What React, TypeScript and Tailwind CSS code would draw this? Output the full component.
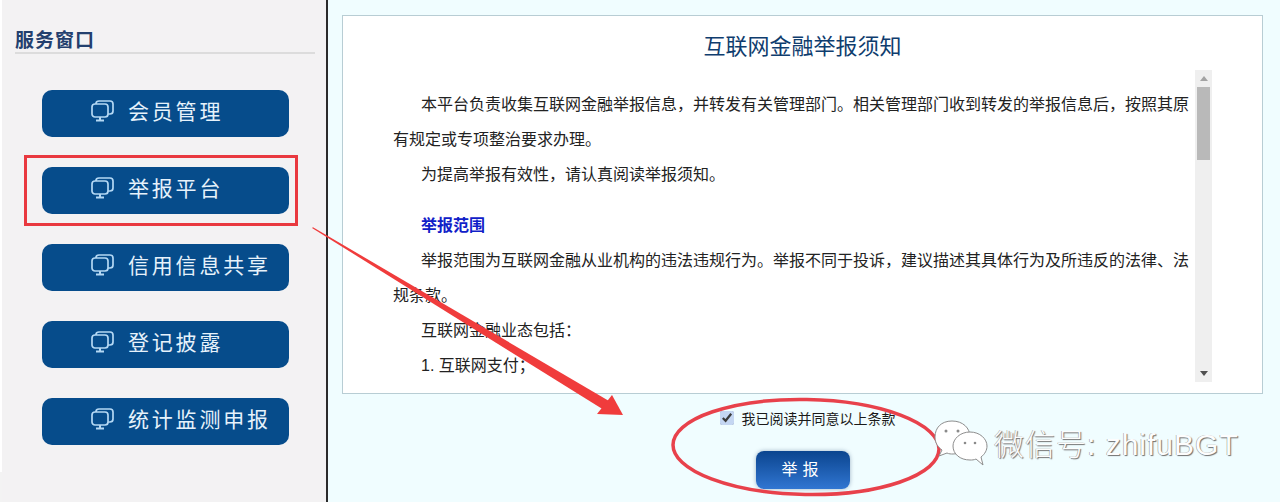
const cjk = "font-['Liberation_Sans','Noto_Sans_CJK_SC',sans-serif]";

const menu = ["会员管理", "举报平台", "信用信息共享", "登记披露", "统计监测申报"];

const MonitorIcon = () => (
  <svg width="23" height="22" viewBox="0 0 23 22" fill="none" stroke="#b4d8f4" strokeWidth="1.7" className="shrink-0">
    <rect x="1" y="4" width="16" height="13" rx="3" />
    <path d="M5 4 V3.5 Q5 1 8 1 H19 Q22 1 22 4 V11 Q22 14 19 14 H17" />
    <path d="M9 17 V20 M5 20.5 H13" strokeWidth="2" />
  </svg>
);

const ScrollBar = () => (
  <div className="w-[17px] h-[312px] bg-[#efefef] flex flex-col items-center shrink-0">
    <div className="h-[17px] flex items-center justify-center">
      <div className="w-0 h-0 border-x-[4px] border-x-transparent border-b-[5px] border-b-[#a3a3a3]" />
    </div>
    <div className="w-[13px] h-[73px] bg-[#b9b9b9]" />
    <div className="flex-1" />
    <div className="h-[17px] flex items-center justify-center">
      <div className="w-0 h-0 border-x-[4px] border-x-transparent border-t-[5px] border-t-[#505050]" />
    </div>
  </div>
);

const Notes = () => (
  <svg width="1280" height="502" className="absolute left-0 top-0 pointer-events-none">
    <polygon points="312,228 313,227.2 609,401 604,410" fill="#f03c3c" />
    <polygon points="623,415 597,414 612,395" fill="#f03c3c" />
    <ellipse cx="806" cy="447" rx="133" ry="47.5" fill="none" stroke="#e8414b" strokeWidth="3.5" transform="rotate(1 806 447)" />
    <g stroke="#8d8d8d" strokeWidth="1" fill="#ffffff">
      <path d="M952 421 C941 421 935 428 935 437 C935 443 938 447 942 450 L939 456 L947 453 C949 454 951 454 953 454 C964 454 970 447 970 437 C970 428 963 421 952 421 Z" />
      <path d="M970 432 C960 432 953 439 953 446 C953 454 960 460 970 460 C972 460 974 460 976 459 L983 465 L981 457 C985 454 987 450 987 446 C987 439 980 432 970 432 Z" />
    </g>
    <g fill="#8a8a8a">
      <circle cx="946" cy="431" r="1.5" />
      <circle cx="958" cy="431" r="1.5" />
      <circle cx="965" cy="443" r="1.3" />
      <circle cx="975" cy="443" r="1.3" />
    </g>
  </svg>
);

export default function App() {
  return (
    <div className={`relative w-[1280px] h-[502px] overflow-hidden flex bg-[#f3f3f3] ${cjk}`}>
      <div className="w-[2px] h-[472px] bg-white shrink-0" />

      <aside className="w-[324px] h-full shrink-0 bg-[#f3f2f3]">
        <div className="ml-[13px] w-[300px] mt-[29px] h-[25px] border-b-2 border-[#dcdcdc]">
          <h2 className="text-[19px] leading-[24px] font-bold tracking-[1px] text-[#23406e]">服务窗口</h2>
        </div>
        <nav className="mt-[36px] ml-[40px] flex flex-col gap-[30px]">
          {menu.map((item) => (
            <a key={item} className="w-[247px] h-[47px] pl-[49px] pb-[5px] flex items-center gap-[14px] rounded-[10px] bg-[#064c8b] text-[#e6f2fb]">
              <MonitorIcon />
              <span className="text-[21px] leading-none tracking-[2.8px] whitespace-nowrap">{item}</span>
            </a>
          ))}
        </nav>
      </aside>

      <div className="w-[2px] h-full bg-[#2b2b2b] shrink-0" />

      <main className="flex-1 bg-[#f0fdff] pl-[14px] pr-[17px] pt-[15px]">
        <section className="h-[379px] border border-[#b8cdd4] bg-white flex flex-col">
          <h1 className="h-[54px] pt-[15px] text-center text-[22px] leading-[32px] text-[#0f3d6e]">互联网金融举报须知</h1>
          <div className="flex pl-[50px]">
            <div className="w-[802px] h-[312px] overflow-hidden pt-[17px] text-[16px] leading-[35px] text-[#222]">
              <div className="w-[796px]">
                <p className="indent-[28px]">本平台负责收集互联网金融举报信息，并转发有关管理部门。相关管理部门收到转发的举报信息后，按照其原有规定或专项整治要求办理。</p>
                <p className="indent-[28px]">为提高举报有效性，请认真阅读举报须知。</p>
                <p className="indent-[28px] mt-[16px] font-bold text-[#1020c8]">举报范围</p>
                <p className="indent-[28px]">举报范围为互联网金融从业机构的违法违规行为。举报不同于投诉，建议描述其具体行为及所违反的法律、法规条款。</p>
                <p className="indent-[28px]">互联网金融业态包括：</p>
                <p className="indent-[28px]">1. 互联网支付；</p>
              </div>
            </div>
            <ScrollBar />
          </div>
        </section>

        <div className="flex flex-col items-center">
          <label className="mt-[15px] ml-[10px] h-[20px] flex items-center gap-[8px] text-[14px] leading-[20px] text-[#1a1a1a]">
            <input type="checkbox" checked readOnly className="size-[14px] -mt-[2px] accent-[#c4d6f2]" />
            我已阅读并同意以上条款
          </label>
          <button className="mt-[22px] w-[94px] h-[38px] rounded-[8px] bg-gradient-to-b from-[#0a458f] to-[#3076d2] text-[16px] tracking-[5px] text-white shadow-[0_0_4px_rgba(0,40,90,0.35)]">
            举报
          </button>
        </div>
      </main>

      <Notes />
      <div className="absolute left-[24px] top-[155px] w-[274px] h-[71px] border-[3px] border-[#e9393f] pointer-events-none" />
      <div className="absolute left-[994px] top-[424px] text-[30px] leading-[42px] font-light tracking-[1px] whitespace-nowrap text-[#fdfdfd] [text-shadow:1px_1px_1px_#6f6f6f,-0.5px_-0.5px_0_#9a9a9a]">
        微信号: zhifuBGT
      </div>
    </div>
  );
}
